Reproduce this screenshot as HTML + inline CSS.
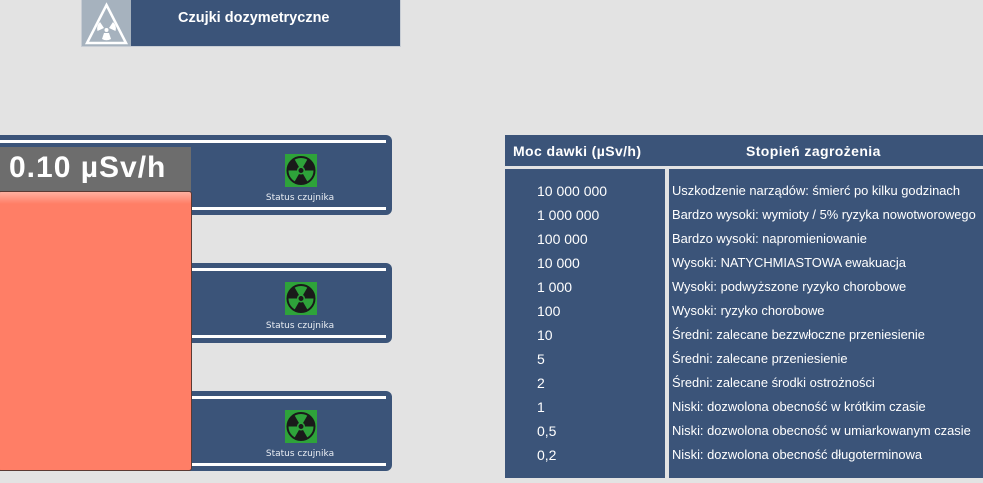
<!DOCTYPE html>
<html><head><meta charset="utf-8"><style>
*{margin:0;padding:0;box-sizing:border-box}
body{width:983px;height:483px;background:#e3e3e3;position:relative;overflow:hidden;font-family:"Liberation Sans",sans-serif}
.abs{position:absolute}
.hdr{left:81px;top:0;width:320px;height:47px;background:#3b5479;border:1px solid #c8cdd4;border-top:none}
.hdr .ic{position:absolute;left:0;top:0;width:49px;height:46px;background:#a6b2be}
.hdr .t{position:absolute;left:96px;top:10px;color:#fff;font-weight:bold;font-size:14.5px;white-space:nowrap}
.panel{left:-10px;width:402px;height:80px;background:#3b5479;border-radius:6px}
.panel .l1,.panel .l2{position:absolute;left:0;width:396px;height:3px;background:#fff}
.panel .l1{top:5px}.panel .l2{bottom:5px}
.panel .g{position:absolute;left:295px;top:19px;width:32px;height:33px;background:#2ea33a}
.panel .s{position:absolute;left:260px;width:100px;text-align:center;top:58px;color:#e8ecf2;font-size:9px;font-family:"DejaVu Sans",sans-serif}
.row{position:absolute;color:#fff;font-size:14px;font-weight:bold;letter-spacing:0.4px}
</style></head><body>
<div class="abs hdr"><div class="ic"><svg width="49" height="46" viewBox="0 0 49 46"><polygon points="24.5,5 44,43 5,43" fill="none" stroke="#fff" stroke-width="2.5"/><g fill="#fff"><circle cx="24.5" cy="30" r="2"/><path d="M22 28 L18 22 A9 9 0 0 0 15.5 31 Z"/><path d="M27 28 L31 22 A9 9 0 0 1 33.5 31 Z"/><path d="M22 33 L27 33 L29 39 A9 9 0 0 1 20 39 Z"/></g></svg></div><div class="t">Czujki dozymetryczne</div></div>

<div class="abs panel" style="top:135px"><div class="l1"></div><div class="l2"></div><div class="g"><svg width="32" height="33" viewBox="0 0 32 33"><circle cx="16" cy="16.5" r="13.5" fill="#1a1a1a"/><g fill="#2ea33a"><path d="M16 16.5 L9.5 5.2 A13 13 0 0 1 22.5 5.2 Z"/><path d="M16 16.5 L29 16.5 A13 13 0 0 1 22.5 27.8 Z"/><path d="M16 16.5 L9.5 27.8 A13 13 0 0 1 3 16.5 Z"/><circle cx="16" cy="16.5" r="4"/></g><circle cx="16" cy="16.5" r="2.5" fill="#1a1a1a"/><circle cx="16" cy="16.5" r="13.5" fill="none" stroke="#1a1a1a" stroke-width="2"/></svg></div><div class="s">Status czujnika</div></div>
<div class="abs panel" style="top:263px"><div class="l1"></div><div class="l2"></div><div class="g"><svg width="32" height="33" viewBox="0 0 32 33"><circle cx="16" cy="16.5" r="13.5" fill="#1a1a1a"/><g fill="#2ea33a"><path d="M16 16.5 L9.5 5.2 A13 13 0 0 1 22.5 5.2 Z"/><path d="M16 16.5 L29 16.5 A13 13 0 0 1 22.5 27.8 Z"/><path d="M16 16.5 L9.5 27.8 A13 13 0 0 1 3 16.5 Z"/><circle cx="16" cy="16.5" r="4"/></g><circle cx="16" cy="16.5" r="2.5" fill="#1a1a1a"/><circle cx="16" cy="16.5" r="13.5" fill="none" stroke="#1a1a1a" stroke-width="2"/></svg></div><div class="s">Status czujnika</div></div>
<div class="abs panel" style="top:391px"><div class="l1"></div><div class="l2"></div><div class="g"><svg width="32" height="33" viewBox="0 0 32 33"><circle cx="16" cy="16.5" r="13.5" fill="#1a1a1a"/><g fill="#2ea33a"><path d="M16 16.5 L9.5 5.2 A13 13 0 0 1 22.5 5.2 Z"/><path d="M16 16.5 L29 16.5 A13 13 0 0 1 22.5 27.8 Z"/><path d="M16 16.5 L9.5 27.8 A13 13 0 0 1 3 16.5 Z"/><circle cx="16" cy="16.5" r="4"/></g><circle cx="16" cy="16.5" r="2.5" fill="#1a1a1a"/><circle cx="16" cy="16.5" r="13.5" fill="none" stroke="#1a1a1a" stroke-width="2"/></svg></div><div class="s">Status czujnika</div></div>

<div class="abs" style="left:0;top:147px;width:191px;height:44px;background:#6d6d6d;color:#fff;font-weight:bold;font-size:30px;letter-spacing:1px;padding:4px 0 0 9px;white-space:nowrap">0.10 µSv/h</div>
<div class="abs" style="left:-2px;top:191px;width:194px;height:280px;background:linear-gradient(#ffb0a0 0,#ff7e66 12px,#ff7e66);border:1px solid #5a3a33;border-radius:3px"></div>

<div class="abs" style="left:505px;top:135px;width:478px;height:31px;background:#3b5479"></div>
<div class="abs" style="left:505px;top:169px;width:160px;height:309px;background:#3b5479"></div>
<div class="abs" style="left:669px;top:169px;width:314px;height:309px;background:#3b5479"></div>
<div class="row" style="left:513px;top:143px">Moc dawki (µSv/h)</div>
<div class="row" style="left:746px;top:143px">Stopień zagrożenia</div>
<div class="abs" style="left:537px;top:179px;line-height:24px;color:#fff;font-size:14px;white-space:nowrap">10 000 000<br>1 000 000<br>100 000<br>10 000<br>1 000<br>100<br>10<br>5<br>2<br>1<br>0,5<br>0,2</div>
<div class="abs" style="left:672px;top:179px;line-height:24px;color:#fff;font-size:12.9px;white-space:nowrap">Uszkodzenie narządów: śmierć po kilku godzinach<br>Bardzo wysoki: wymioty / 5% ryzyka nowotworowego<br>Bardzo wysoki: napromieniowanie<br>Wysoki: NATYCHMIASTOWA ewakuacja<br>Wysoki: podwyższone ryzyko chorobowe<br>Wysoki: ryzyko chorobowe<br>Średni: zalecane bezzwłoczne przeniesienie<br>Średni: zalecane przeniesienie<br>Średni: zalecane środki ostrożności<br>Niski: dozwolona obecność w krótkim czasie<br>Niski: dozwolona obecność w umiarkowanym czasie<br>Niski: dozwolona obecność długoterminowa</div>
</body></html>
